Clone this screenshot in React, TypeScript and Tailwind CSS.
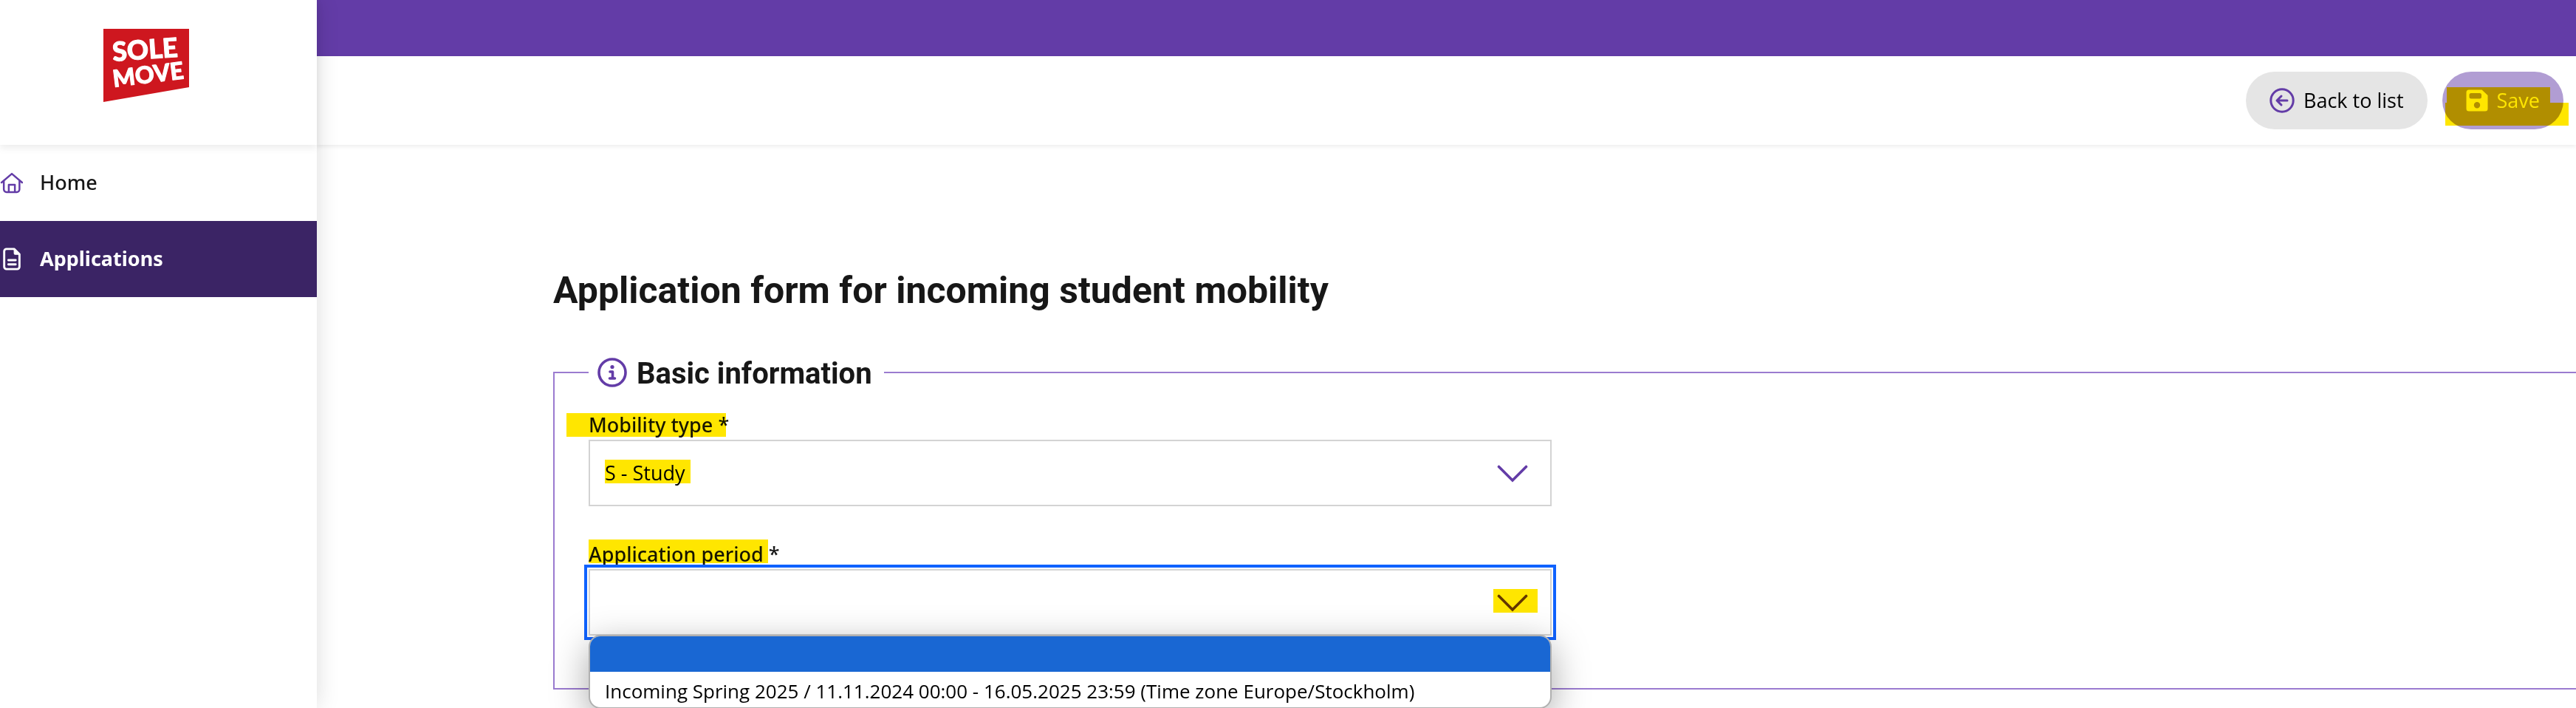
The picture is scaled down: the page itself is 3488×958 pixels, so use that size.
import React, { useState } from 'react';

interface IconProps {
  className?: string;
}

const IconHome: React.FC<IconProps> = ({ className }) => (
  <svg viewBox="0 0 30 30" fill="none" stroke="currentColor" strokeWidth="2.4" strokeLinecap="round" strokeLinejoin="round" className={className} aria-hidden="true">
    <path d="M2 14.5 15.500 3 29 14.500" />
    <path d="M5 13v10.500a3.500 3.500 0 0 0 3.500 3.500h13.500a3.500 3.500 0 0 0 3.500-3.500V13" />
    <path d="M11.500 26.500V17.500h8v9" />
  </svg>
);

const IconDocument: React.FC<IconProps> = ({ className }) => (
  <svg viewBox="0 0 30 30" fill="none" stroke="currentColor" strokeWidth="2.8" strokeLinecap="round" strokeLinejoin="round" className={className} aria-hidden="true">
    <path d="M18.500 1.800H8.500a3 3 0 0 0-3 3v20.400a3 3 0 0 0 3 3h14a3 3 0 0 0 3-3V8.800z" />
    <path d="M18.500 2v5a2 2 0 0 0 2 2h5z" fill="currentColor" strokeWidth="1" />
    <path d="M11 16.500h9.500M11 22h9.500" />
  </svg>
);

const IconBack: React.FC<IconProps> = ({ className }) => (
  <svg viewBox="0 0 34 34" fill="none" stroke="currentColor" strokeWidth="3" strokeLinecap="round" strokeLinejoin="round" className={className} aria-hidden="true">
    <circle cx="17" cy="17" r="15.200" />
    <path d="M24 17H10M16 11l-6 6 6 6" />
  </svg>
);

const IconSave: React.FC<IconProps> = ({ className }) => (
  <svg viewBox="0 0 30 30" fill="currentColor" fillRule="evenodd" className={className} aria-hidden="true">
    <path d="M4 .5h17.500L29.500 8v18a3.500 3.500 0 0 1-3.500 3.500H4A3.500 3.500 0 0 1 .5 26V4A3.500 3.500 0 0 1 4 .5zM7 5a2.500 2.500 0 0 0-2.500 2.500v2.500A2.500 2.500 0 0 0 7 12.500h11.500A2.500 2.500 0 0 0 21 10V7.500A2.500 2.500 0 0 0 18.500 5zM15 17a4.200 4.200 0 1 0 0 8.400 4.200 4.200 0 0 0 0-8.400z" />
  </svg>
);

const IconInfo: React.FC<IconProps> = ({ className }) => (
  <svg viewBox="0 0 40 40" fill="none" stroke="currentColor" strokeWidth="3.600" strokeLinecap="round" strokeLinejoin="round" className={className} aria-hidden="true">
    <circle cx="20" cy="20" r="18" />
    <circle cx="20" cy="12.500" r="2.600" fill="currentColor" stroke="none" />
    <path d="M17 19h3.500v9M16.500 28h7" />
  </svg>
);

const IconChevron: React.FC<IconProps> = ({ className }) => (
  <svg viewBox="0 0 42 24" fill="none" stroke="currentColor" strokeWidth="3.600" strokeLinecap="round" className={className} aria-hidden="true">
    <path d="M2.500 2.500 21 21 39.500 2.500" />
  </svg>
);

const Logo: React.FC = () => (
  <svg viewBox="0 0 116 99" className="w-[116px]" role="img" aria-label="Sole Move">
    <path d="M0 0h116v79L0 99z" fill="#ce171f" />
    <g fill="#fff" stroke="#fff" strokeWidth="1" strokeLinejoin="round" fontFamily="Lato, sans-serif" fontWeight="900">
      <text x="13" y="44" fontSize="36" transform="rotate(-4 13 44)">SOLE</text>
      <text x="14" y="79" fontSize="32" transform="rotate(-7 14 79)">MOVE</text>
    </g>
  </svg>
);

// Marker-pen stroke laid over a control or a label
const Highlight: React.FC<IconProps> = ({ className }) => (
  <span className={`absolute bg-[#ffe600] mix-blend-multiply pointer-events-none ${className}`} />
);

interface FieldProps {
  id: string;
  label: string;
  value: string;
  options: string[];
  onChange: (value: string) => void;
  labelMark: string;
  focused?: boolean;
  children?: React.ReactNode;
}

const SelectField: React.FC<FieldProps> = ({ id, label, value, options, onChange, labelMark, focused, children }) => (
  <div className="w-[1304px] max-w-full">
    <label htmlFor={id} className="relative mb-1 block w-fit font-['Noto_Sans',sans-serif] text-[27px] leading-8 font-medium">
      {label} *
      <Highlight className={labelMark} />
    </label>
    <div className="relative">
      <select
        id={id}
        value={value}
        onChange={(e) => onChange(e.target.value)}
        className={`block w-full h-[90px] appearance-none border-2 border-[#d3d3d3] bg-white pl-5 pr-24 text-[27px] text-black outline-none ${focused ? 'ring-4 ring-[#0f62fe] ring-offset-2' : ''}`}
      >
        {options.map((o) => (
          <option key={o} value={o}>{o}</option>
        ))}
      </select>
      <IconChevron className="absolute right-8 top-[34px] w-[42px] text-[#633ca7] pointer-events-none" />
      {children}
    </div>
  </div>
);

const PERIODS = ['', 'Incoming Spring 2025 / 11.11.2024 00:00 - 16.05.2025 23:59 (Time zone Europe/Stockholm)'];

export default function App() {
  const [mobilityType, setMobilityType] = useState('S - Study');
  const [period, setPeriod] = useState('');

  return (
    <div className="flex min-h-screen overflow-hidden bg-white text-[#171717] font-['Open_Sans','Noto_Sans',sans-serif]">
      {/* Sidebar */}
      <aside className="relative z-10 flex-none w-[429px] bg-white shadow-[0_0_30px_rgba(0,0,0,0.14)]">
        <div className="flex h-[196px] items-start pl-[140px] pt-[39px] shadow-[0_4px_10px_rgba(0,0,0,0.08)]">
          <Logo />
        </div>
        <nav className="font-['Noto_Sans',sans-serif] text-[27px]">
          <a href="#home" className="flex h-[103px] items-center gap-[23px] font-medium">
            <IconHome className="w-[31px] text-[#633ca7]" />
            Home
          </a>
          <a href="#applications" className="flex h-[103px] items-center gap-[23px] bg-[#3b2465] font-bold text-white">
            <IconDocument className="w-[31px]" />
            Applications
          </a>
        </nav>
      </aside>

      <div className="flex-1 min-w-0">
        {/* Top bar */}
        <div className="h-[76px] bg-[#633ca7]" />
        <header className="flex h-[120px] items-center justify-end gap-5 pr-[17px] shadow-[0_2px_6px_rgba(0,0,0,0.08)]">
          <button type="button" className="flex h-[78px] items-center gap-3 rounded-full bg-[#e5e5e5] px-8 text-[27px] text-black">
            <IconBack className="w-[34px] text-[#633ca7]" />
            Back to list
          </button>
          <button type="button" className="relative flex h-[78px] items-center gap-3 rounded-full bg-[#b19dd3] px-8 text-[27px] text-white">
            <IconSave className="w-[30px]" />
            Save
            <Highlight className="left-[6px] top-[21px] h-[21px] w-[140px]" />
            <Highlight className="left-[4px] top-[42px] h-[31px] w-[167px]" />
          </button>
        </header>

        {/* Application form */}
        <main className="pl-[320px] pt-[165px]">
          <h1 className="font-['Roboto',sans-serif] text-[50px] leading-[64px] font-bold">
            Application form for incoming student mobility
          </h1>
          <fieldset className="mt-[55px] h-[453px] border-2 border-r-0 border-[#9b7bd0] pl-[46px]">
            <legend className="flex items-center gap-[13px] pl-3 pr-4 font-['Roboto',sans-serif] text-[40px] leading-[48px] font-bold">
              <IconInfo className="w-[40px] text-[#633ca7]" />
              <span className="pt-1 leading-[44px]">Basic information</span>
            </legend>
            <div className="flex flex-col gap-[49px] pt-[31px]">
              <SelectField
                id="mobility-type"
                label="Mobility type"
                value={mobilityType}
                options={['S - Study', 'T - Traineeship']}
                onChange={setMobilityType}
                labelMark="-left-[30px] right-1 top-0 h-8"
              >
                <Highlight className="left-[22px] top-[27px] h-8 w-[116px]" />
              </SelectField>
              <SelectField
                id="application-period"
                label="Application period"
                value={period}
                options={PERIODS}
                onChange={setPeriod}
                labelMark="left-0 right-4 -top-1 h-8"
                focused
              >
                <Highlight className="right-[19px] top-[27px] h-8 w-[60px]" />
                <ul
                  role="listbox"
                  aria-label="Application period"
                  className="absolute inset-x-0 top-[89px] overflow-hidden rounded-2xl border-2 border-[#b0b0b0] bg-white text-[26px] text-black shadow-[0_14px_50px_rgba(0,0,0,0.35)]"
                >
                  {PERIODS.map((p) => (
                    <li
                      key={p}
                      role="option"
                      aria-selected={p === period}
                      onClick={() => setPeriod(p)}
                      className="h-12 pl-5 leading-[52px] aria-selected:bg-[#1967d3]"
                    >
                      {p}
                    </li>
                  ))}
                </ul>
              </SelectField>
            </div>
          </fieldset>
        </main>
      </div>
    </div>
  );
}
